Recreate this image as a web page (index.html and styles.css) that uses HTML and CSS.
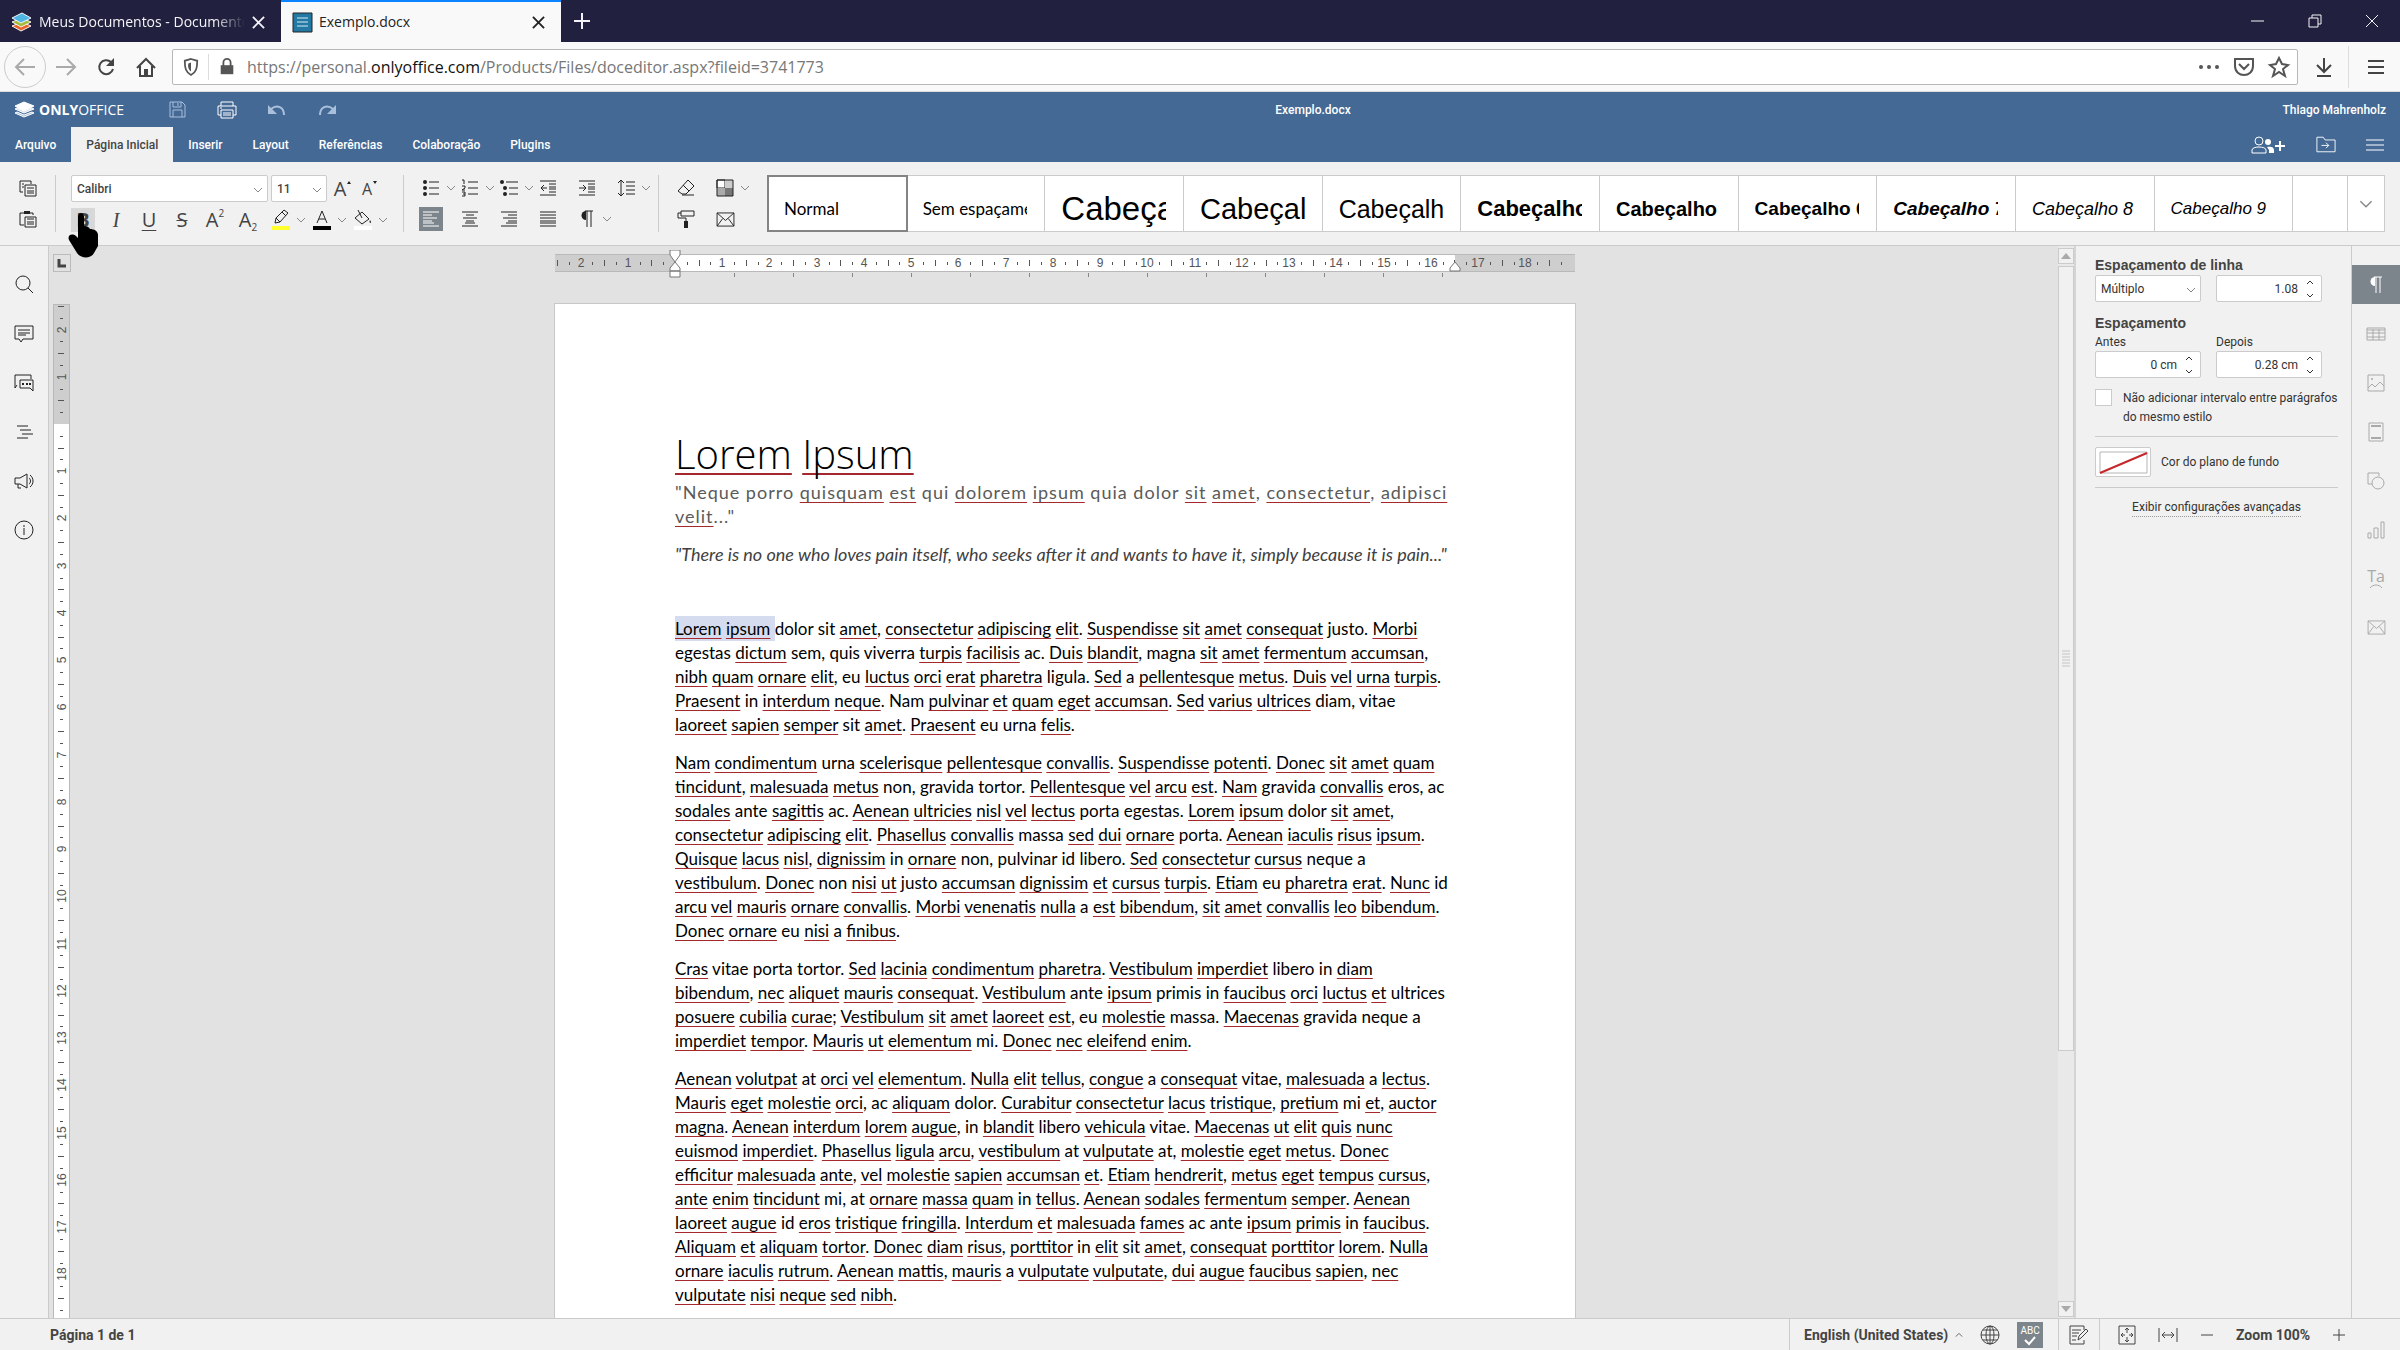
FILE: index.html
```html
<!DOCTYPE html>
<html lang="pt-BR">
<head>
<meta charset="utf-8">
<title>Exemplo.docx</title>
<link rel="stylesheet" href="styles.css">
</head>
<body>
<svg class="defs" aria-hidden="true">
  <symbol id="chev" viewBox="0 0 10 10"><path d="M1 3l4 4 4-4"/></symbol>
  <symbol id="cross" viewBox="0 0 14 14"><path d="M1 1l12 12M13 1L1 13"/></symbol>
  <symbol id="mail" viewBox="0 0 20 16"><path d="M1 1h18v14H1zM1 1l9 8 9-8M1 15l6-8M19 15l-6-8"/></symbol>
  <symbol id="pilcrow" viewBox="0 0 14 18"><path class="solid" d="M6 1a4 4 0 0 0 0 9z"/><path d="M5 1h8M7 1v16M11 1v16"/></symbol>
</svg>

<header class="tabstrip">
  <div class="btab">
    <svg class="i" width="21" height="21" viewBox="0 0 21 21"><path d="M1 14l10-4 9 4-10 5z" fill="#e8662a"/><path d="M1 10l10-4 9 4-10 5z" fill="#a5bd3a"/><path d="M1 6l10-5 9 5-10 5z" fill="#4fb6e3"/></svg>
    <span class="btab-title fade">Meus Documentos - Documentos</span>
    <button class="bare" aria-label="Fechar aba"><svg class="i ln2" width="13" height="13"><use href="#cross"/></svg></button>
  </div>
  <div class="btab active">
    <svg class="i" width="19" height="19" viewBox="0 0 19 19"><path d="M0 0h19v19H0z" fill="#2379a3"/><path d="M4 5h11M4 9h11M4 13h11" stroke="#d5ecf5" stroke-width="1"/></svg>
    <span class="btab-title">Exemplo.docx</span>
    <button class="bare" aria-label="Fechar aba"><svg class="i ln2" width="13" height="13"><use href="#cross"/></svg></button>
  </div>
  <button class="bare newtab" aria-label="Nova aba"><svg class="i ln2" width="18" height="18" viewBox="0 0 18 18"><path d="M9 1v16M1 9h16"/></svg></button>
  <div class="wincontrols">
    <button class="bare" aria-label="Minimizar"><svg class="i" width="14" height="14" viewBox="0 0 14 14"><path d="M0 7h13"/></svg></button>
    <button class="bare" aria-label="Restaurar"><svg class="i" width="14" height="14" viewBox="0 0 14 14"><path d="M1 4h9v9H1zM4 4V1h9v9h-3"/></svg></button>
    <button class="bare" aria-label="Fechar"><svg class="i" width="14" height="14"><use href="#cross"/></svg></button>
  </div>
</header>

<nav class="navbar">
  <button class="bare back" aria-label="Voltar"><svg class="i ln2" width="22" height="20" viewBox="0 0 22 20"><path d="M21 10H2M10 2l-8 8 8 8"/></svg></button>
  <button class="bare dim" aria-label="Avançar"><svg class="i ln2" width="22" height="20" viewBox="0 0 22 20"><path d="M1 10h19M12 2l8 8-8 8"/></svg></button>
  <button class="bare" aria-label="Recarregar"><svg class="i ln2" width="20" height="20" viewBox="0 0 20 20"><path d="M15 5a7 7 0 1 0 2 7"/><path class="solid" d="M18 1v8h-8z"/></svg></button>
  <button class="bare" aria-label="Início"><svg class="i ln2" width="20" height="20" viewBox="0 0 20 20"><path d="M1 11l9-9 9 9M4 9v10h12V9"/><path class="solid" d="M8 12h4v7H8z"/></svg></button>
  <div class="urlbox">
    <svg class="i ln2" width="16" height="18" viewBox="0 0 18 20"><path d="M9 1l7 2c0 8-1 13-7 16C3 16 2 11 2 3z"/><path class="solid" d="M9 5v10c-3-2-4-6-3-9z"/></svg>
    <span class="vsep"></span>
    <svg class="i ln2 lock" width="18" height="18" viewBox="0 0 18 20"><path d="M5 9V5a4 4 0 0 1 8 0v4"/><path class="solid" d="M2 8h14v10H2z"/></svg>
    <span class="url">https://personal.<b>onlyoffice.com</b>/Products/Files/doceditor.aspx?fileid=3741773</span>
    <svg class="i" width="20" height="20" viewBox="0 0 20 20"><g class="solid"><circle cx="2" cy="10" r="2"/><circle cx="10" cy="10" r="2"/><circle cx="18" cy="10" r="2"/></g></svg>
    <svg class="i ln2" width="20" height="20" viewBox="0 0 20 20"><path d="M1 2h18v7c0 12-18 12-18 0zM5 7l5 5 5-5"/></svg>
    <svg class="i ln2" width="20" height="20" viewBox="0 0 20 20"><path d="M10 1l3 6 6 1-5 4 2 7-6-4-6 4 2-7-5-4 6-1z"/></svg>
  </div>
  <button class="bare" aria-label="Downloads"><svg class="i ln2" width="18" height="20" viewBox="0 0 18 20"><path d="M9 1v13M2 8l7 7 7-7M2 19h14"/></svg></button>
  <span class="vsep tall"></span>
  <button class="bare" aria-label="Menu"><svg class="i ln2" width="16" height="18" viewBox="0 0 16 18"><path d="M0 3h16M0 9h16M0 15h16"/></svg></button>
</nav>

<div class="apphead">
  <div class="titlebar">
    <a class="logo" href="#"><svg class="i" width="21" height="17" viewBox="0 0 21 17"><path d="M1 12l9 4 10-4-2-1-8 3-7-3z" fill="#a9bfd8"/><path d="M1 8l9 4 10-4-2-1-8 3-7-3z" fill="#d5e0ec"/><path d="M1 5l9-4 10 4-10 5z" fill="#fff"/></svg><span><b>ONLY</b>OFFICE</span></a>
    <button class="bare soft" aria-label="Salvar"><svg class="i" width="17" height="17" viewBox="0 0 17 17"><path d="M1 1h12l3 3v12H1zM4 1v5h8V1M4 16V9h9v7M9 2v3"/></svg></button>
    <button class="bare" aria-label="Imprimir"><svg class="i" width="20" height="18" viewBox="0 0 20 18"><path d="M4 5V1h12v4M4 14H1V5h18v9h-3M4 9h12v8H4zM6 12h8M6 14h8M3 7h2"/></svg></button>
    <button class="bare soft" aria-label="Desfazer"><svg class="i" width="18" height="12" viewBox="0 0 18 12"><path class="ln2" d="M3 5c6-5 13-2 13 6"/><path class="solid" d="M0 1v9h9z"/></svg></button>
    <button class="bare soft" aria-label="Refazer"><svg class="i" width="18" height="12" viewBox="0 0 18 12"><path class="ln2" d="M15 5C9 0 2 3 2 11"/><path class="solid" d="M18 1v9H9z"/></svg></button>
    <span class="docname">Exemplo.docx</span>
    <span class="user">Thiago Mahrenholz</span>
  </div>
  <div class="menubar">
    <button class="mtab">Arquivo</button><button class="mtab on">Página Inicial</button><button class="mtab">Inserir</button><button class="mtab">Layout</button><button class="mtab">Referências</button><button class="mtab">Colaboração</button><button class="mtab">Plugins</button>
    <div class="menuright">
      <button class="bare" aria-label="Compartilhar"><svg class="i" width="35" height="18" viewBox="0 0 35 18"><circle cx="8" cy="5" r="4"/><path d="M1 17v-3c0-4 14-4 14 0v3z"/><circle class="solid" cx="17" cy="6" r="3"/><path class="solid" d="M16 11c4-1 7 0 7 3v3h-5v-3z"/><path class="ln2" d="M29 5v10M24 10h10"/></svg></button>
      <button class="bare" aria-label="Abrir local"><svg class="i" width="20" height="17" viewBox="0 0 22 18"><path d="M1 17V1h7l2 3h11v13zM6 10h8M11 7l3 3-3 3"/></svg></button>
      <button class="bare" aria-label="Opções"><svg class="i" width="18" height="14" viewBox="0 0 18 14"><path d="M0 2h18M0 7h18M0 12h18"/></svg></button>
    </div>
  </div>
</div>

<div class="toolbar">
  <div class="group clip">
    <div class="trow"><button class="tb" aria-label="Copiar"><svg class="i" width="18" height="17" viewBox="0 0 18 17"><path d="M4 12H1V1h11v3M3 4h2M3 7h2M6 5h11v11H6zM8 8h7M8 11h7M8 13h7"/></svg></button></div>
    <div class="trow"><button class="tb" aria-label="Colar"><svg class="i" width="18" height="18" viewBox="0 0 18 18"><path d="M5 15H1V3h13v2M6 7h11v10H6zM8 9h7M8 12h7M8 14h7"/><path class="solid" d="M5 1h6v3H5z"/></svg></button></div>
  </div>
  <div class="group font">
    <div class="trow">
      <label class="combo family"><select aria-label="Fonte"><option>Calibri</option></select><svg class="i"><use href="#chev"/></svg></label>
      <label class="combo size"><select aria-label="Tamanho"><option>11</option></select><svg class="i"><use href="#chev"/></svg></label>
      <button class="tb big" aria-label="Aumentar fonte">A<svg class="i tri" width="6" height="5" viewBox="0 0 6 5"><path class="solid" d="M1 4l2-3 2 3z"/></svg></button>
      <button class="tb small" aria-label="Diminuir fonte">A<svg class="i tri" width="6" height="5" viewBox="0 0 6 5"><path class="solid" d="M1 1l2 3 2-3z"/></svg></button>
    </div>
    <div class="trow letters">
      <button class="tb on-soft"><b>B</b></button>
      <button class="tb it">I</button>
      <button class="tb un">U</button>
      <button class="tb st">S</button>
      <button class="tb">A<sup>2</sup></button>
      <button class="tb">A<sub>2</sub></button>
      <div class="split"><button class="tb" aria-label="Realce"><svg class="i" width="20" height="21" viewBox="0 0 20 21"><path d="M13 1l4 3-8 9-5 1 1-5zM5 9l4 4M11 3l4 4"/><path d="M1 17h18v4H1z" fill="#ffff2e" stroke="none"/></svg></button><svg class="i chev"><use href="#chev"/></svg></div>
      <div class="split"><button class="tb" aria-label="Cor da fonte"><svg class="i" width="20" height="21" viewBox="0 0 20 21"><path d="M5 14l5-12 5 12M7 10h6"/><path d="M1 17h18v4H1z" fill="#000" stroke="none"/></svg></button><svg class="i chev"><use href="#chev"/></svg></div>
      <div class="split"><button class="tb" aria-label="Sombreamento"><svg class="i" width="20" height="21" viewBox="0 0 20 21"><path d="M9 3l7 7-7 5-7-6zM5 1l4 8"/><path class="solid" d="M17 11c3 4-2 4 0 0z"/><path d="M1 17h18v4H1z" fill="#fff" stroke="none"/></svg></button><svg class="i chev"><use href="#chev"/></svg></div>
    </div>
  </div>
  <div class="group para">
    <div class="trow">
      <div class="cell"><button class="tb" aria-label="Marcadores"><svg class="i" width="18" height="18" viewBox="0 0 18 18"><path d="M7 3h10M7 9h10M7 15h10"/><g class="solid"><circle cx="3" cy="3" r="2"/><circle cx="3" cy="9" r="2"/><circle cx="3" cy="15" r="2"/></g></svg></button><svg class="i chev"><use href="#chev"/></svg></div>
      <div class="cell"><button class="tb" aria-label="Numeração"><svg class="i" width="18" height="18" viewBox="0 0 18 18"><path d="M7 3h10M7 9h10M7 15h10M1 1h2v4M1 7h3v2l-3 2h3M1 13h3v4H1M2 15h2"/></svg></button><svg class="i chev"><use href="#chev"/></svg></div>
      <div class="cell"><button class="tb" aria-label="Lista multinível"><svg class="i" width="18" height="18" viewBox="0 0 18 18"><path d="M6 3h12M9 9h9M9 15h9"/><g class="solid"><circle cx="2" cy="3" r="2"/><circle cx="5" cy="9" r="2"/><circle cx="5" cy="15" r="2"/></g></svg></button><svg class="i chev"><use href="#chev"/></svg></div>
      <div class="cell"><button class="tb" aria-label="Diminuir recuo"><svg class="i" width="16" height="16" viewBox="0 0 16 16"><path d="M0 1h16M9 4h7M9 7h7M9 9h7M9 12h7M0 15h16M7 8H1M4 5L1 8l3 3"/></svg></button></div>
      <div class="cell"><button class="tb" aria-label="Aumentar recuo"><svg class="i" width="16" height="16" viewBox="0 0 16 16"><path d="M0 1h16M9 4h7M9 7h7M9 9h7M9 12h7M0 15h16M0 8h7M4 5l3 3-3 3"/></svg></button></div>
      <div class="cell"><button class="tb" aria-label="Espaçamento"><svg class="i" width="18" height="18" viewBox="0 0 18 18"><path d="M4 1v16M1 4l3-3 3 3M1 14l3 3 3-3M9 3h9M9 7h9M9 11h9M9 15h9"/></svg></button><svg class="i chev"><use href="#chev"/></svg></div>
    </div>
    <div class="trow">
      <div class="cell"><button class="tb on-dark" aria-label="Alinhar à esquerda"><svg class="i" width="16" height="16" viewBox="0 0 16 16"><path d="M0 1h16M0 4h9M0 7h14M0 10h9M0 12h11M0 15h16"/></svg></button></div>
      <div class="cell"><button class="tb" aria-label="Centralizar"><svg class="i" width="16" height="16" viewBox="0 0 16 16"><path d="M0 1h16M4 4h8M1 7h14M4 10h8M3 12h10M0 15h16"/></svg></button></div>
      <div class="cell"><button class="tb" aria-label="Alinhar à direita"><svg class="i" width="16" height="16" viewBox="0 0 16 16"><path d="M0 1h16M7 4h9M2 7h14M7 10h9M5 12h11M0 15h16"/></svg></button></div>
      <div class="cell"><button class="tb" aria-label="Justificar"><svg class="i" width="16" height="16" viewBox="0 0 16 16"><path d="M0 1h16M0 4h16M0 7h16M0 10h16M0 12h16M0 15h16"/></svg></button></div>
      <div class="cell"><button class="tb" aria-label="Caracteres não imprimíveis"><svg class="i" width="14" height="18"><use href="#pilcrow"/></svg></button><svg class="i chev"><use href="#chev"/></svg></div>
    </div>
  </div>
  <div class="group clean">
    <div class="trow">
      <div class="cell"><button class="tb" aria-label="Limpar estilo"><svg class="i" width="18" height="18" viewBox="0 0 18 18"><path d="M2 11L11 1l6 6-8 8H5l-4-3zM6 6l6 6M5 16h12"/></svg></button></div>
      <div class="cell"><button class="tb" aria-label="Esquema de cores"><svg class="i" width="18" height="18" viewBox="0 0 18 18"><path d="M1 1h8v8H1z" fill="#fff"/><path d="M9 1h8v8H9z" fill="#ccc" stroke="none"/><path d="M1 9h8v8H1z" fill="#aaa" stroke="none"/><path d="M9 9h8v8H9z" fill="#777" stroke="none"/><path d="M1 1h16v16H1z"/></svg></button><svg class="i chev"><use href="#chev"/></svg></div>
    </div>
    <div class="trow">
      <div class="cell"><button class="tb" aria-label="Copiar estilo"><svg class="i" width="18" height="18" viewBox="0 0 18 18"><path d="M4 1h13v5H4zM4 3H1v5h8v3"/><path class="solid" d="M7 11h4v7H7z"/></svg></button></div>
      <div class="cell"><button class="tb" aria-label="Mala direta"><svg class="i" width="19" height="15"><use href="#mail"/></svg></button></div>
    </div>
  </div>
  <div class="gallery">
    <button class="style sel s-normal"><span>Normal</span></button>
    <button class="style s-normal"><span>Sem espaçamento</span></button>
    <button class="style s-h1"><span>Cabeçalho 1</span></button>
    <button class="style s-h2"><span>Cabeçalho 2</span></button>
    <button class="style s-h3"><span>Cabeçalho 3</span></button>
    <button class="style s-h4"><span>Cabeçalho 4</span></button>
    <button class="style s-h5"><span>Cabeçalho 5</span></button>
    <button class="style s-h6"><span>Cabeçalho 6</span></button>
    <button class="style s-h6 it"><span>Cabeçalho 7</span></button>
    <button class="style s-h8 it"><span>Cabeçalho 8</span></button>
    <button class="style s-h9 it"><span>Cabeçalho 9</span></button>
    <span class="style blank"></span>
    <button class="more" aria-label="Mais estilos"><svg class="i" width="14" height="14"><use href="#chev"/></svg></button>
  </div>
</div>

<main class="work">
  <aside class="leftbar">
    <button class="bare" aria-label="Localizar"><svg class="i" width="20" height="20" viewBox="0 0 20 20"><circle cx="9" cy="8" r="7"/><path d="M14 13l5 5"/></svg></button>
    <button class="bare" aria-label="Comentários"><svg class="i" width="20" height="18" viewBox="0 0 20 18"><path d="M1 1h18v13H9l-2 3-2-3H1zM4 5h12M4 8h12M4 10h8"/></svg></button>
    <button class="bare" aria-label="Bate-papo"><svg class="i" width="20" height="18" viewBox="0 0 20 18"><path d="M3 11l-2 3V1h16v4M6 6h13v11l-3-3H6z"/><path class="dots" d="M8 10h2M12 10h2M15 10h2"/></svg></button>
    <button class="bare" aria-label="Navegação"><svg class="i" width="20" height="16" viewBox="0 0 20 16"><path d="M3 2h11M6 6h11M8 10h11M3 14h11"/></svg></button>
    <button class="bare" aria-label="Comentários e suporte"><svg class="i" width="20" height="16" viewBox="0 0 20 16"><path d="M1 5h5l7-4v14l-7-4H1zM4 11v4h3M15 5c2 1 2 5 0 6M16 2c4 3 4 9 0 12"/></svg></button>
    <button class="bare" aria-label="Sobre"><svg class="i" width="20" height="20" viewBox="0 0 20 20"><circle cx="10" cy="10" r="9"/><path d="M10 8v7M10 5v2"/></svg></button>
  </aside>
  <div class="vcol">
    <button class="tabstop" aria-label="Tabulação"><svg class="i ln3" width="10" height="10" viewBox="0 0 10 10"><path d="M2 1v7h7"/></svg></button>
    <svg id="vruler" class="vruler" width="17" height="1014"></svg>
  </div>
  <section class="canvas">
    <svg id="hruler" class="hruler" width="1020" height="28"></svg>
    <article class="page">
      <h1><u>Lorem</u> <u>Ipsum</u></h1>
      <p class="sub"><span>"Neque porro <u>quisquam</u> <u>est</u> qui <u>dolorem</u> <u>ipsum</u> quia dolor <u>sit</u> <u>amet</u>, <u>consectetur</u>, <u>adipisci</u></span><span><u>velit</u>..."</span></p>
      <p class="quote">"There is no one who loves pain itself, who seeks after it and wants to have it, simply because it is pain..."</p>
      <p class="body"><span><mark><u>Lorem</u> <u>ipsum</u> </mark>dolor sit <u>amet</u>, <u>consectetur</u> <u>adipiscing</u> <u>elit</u>. <u>Suspendisse</u> <u>sit</u> <u>amet</u> <u>consequat</u> justo. <u>Morbi</u></span>
      <span>egestas <u>dictum</u> sem, quis viverra <u>turpis</u> <u>facilisis</u> ac. <u>Duis</u> <u>blandit</u>, magna <u>sit</u> <u>amet</u> <u>fermentum</u> <u>accumsan</u>,</span>
      <span><u>nibh</u> <u>quam</u> <u>ornare</u> <u>elit</u>, eu <u>luctus</u> <u>orci</u> <u>erat</u> <u>pharetra</u> ligula. <u>Sed</u> a <u>pellentesque</u> <u>metus</u>. <u>Duis</u> <u>vel</u> <u>urna</u> <u>turpis</u>.</span>
      <span><u>Praesent</u> in <u>interdum</u> <u>neque</u>. Nam <u>pulvinar</u> <u>et</u> <u>quam</u> <u>eget</u> <u>accumsan</u>. <u>Sed</u> <u>varius</u> <u>ultrices</u> diam, vitae</span>
      <span><u>laoreet</u> <u>sapien</u> <u>semper</u> sit <u>amet</u>. <u>Praesent</u> eu urna <u>felis</u>.</span></p>
      <p class="body"><span><u>Nam</u> <u>condimentum</u> urna <u>scelerisque</u> <u>pellentesque</u> <u>convallis</u>. <u>Suspendisse</u> <u>potenti</u>. <u>Donec</u> <u>sit</u> <u>amet</u> <u>quam</u></span>
      <span><u>tincidunt</u>, <u>malesuada</u> <u>metus</u> non, gravida tortor. <u>Pellentesque</u> <u>vel</u> <u>arcu</u> <u>est</u>. <u>Nam</u> gravida <u>convallis</u> eros, ac</span>
      <span><u>sodales</u> ante <u>sagittis</u> ac. <u>Aenean</u> <u>ultricies</u> <u>nisl</u> <u>vel</u> <u>lectus</u> porta egestas. <u>Lorem</u> <u>ipsum</u> dolor <u>sit</u> <u>amet</u>,</span>
      <span><u>consectetur</u> <u>adipiscing</u> <u>elit</u>. <u>Phasellus</u> <u>convallis</u> massa <u>sed</u> <u>dui</u> <u>ornare</u> porta. <u>Aenean</u> <u>iaculis</u> <u>risus</u> <u>ipsum</u>.</span>
      <span><u>Quisque</u> <u>lacus</u> <u>nisl</u>, <u>dignissim</u> in <u>ornare</u> non, pulvinar id libero. <u>Sed</u> <u>consectetur</u> <u>cursus</u> neque a</span>
      <span><u>vestibulum</u>. <u>Donec</u> non <u>nisi</u> <u>ut</u> justo <u>accumsan</u> <u>dignissim</u> <u>et</u> <u>cursus</u> <u>turpis</u>. <u>Etiam</u> eu <u>pharetra</u> <u>erat</u>. <u>Nunc</u> id</span>
      <span><u>arcu</u> <u>vel</u> <u>mauris</u> <u>ornare</u> <u>convallis</u>. <u>Morbi</u> <u>venenatis</u> <u>nulla</u> a <u>est</u> <u>bibendum</u>, <u>sit</u> <u>amet</u> <u>convallis</u> <u>leo</u> <u>bibendum</u>.</span>
      <span><u>Donec</u> <u>ornare</u> eu <u>nisi</u> a <u>finibus</u>.</span></p>
      <p class="body"><span><u>Cras</u> vitae porta tortor. <u>Sed</u> <u>lacinia</u> <u>condimentum</u> <u>pharetra</u>. <u>Vestibulum</u> <u>imperdiet</u> libero in <u>diam</u></span>
      <span><u>bibendum</u>, <u>nec</u> <u>aliquet</u> <u>mauris</u> <u>consequat</u>. <u>Vestibulum</u> ante <u>ipsum</u> primis in <u>faucibus</u> <u>orci</u> <u>luctus</u> <u>et</u> ultrices</span>
      <span><u>posuere</u> <u>cubilia</u> <u>curae</u>; <u>Vestibulum</u> <u>sit</u> <u>amet</u> <u>laoreet</u> <u>est</u>, eu <u>molestie</u> massa. <u>Maecenas</u> gravida neque a</span>
      <span><u>imperdiet</u> <u>tempor</u>. <u>Mauris</u> <u>ut</u> <u>elementum</u> mi. <u>Donec</u> <u>nec</u> <u>eleifend</u> <u>enim</u>.</span></p>
      <p class="body"><span><u>Aenean</u> <u>volutpat</u> at <u>orci</u> <u>vel</u> <u>elementum</u>. <u>Nulla</u> <u>elit</u> <u>tellus</u>, <u>congue</u> a <u>consequat</u> vitae, <u>malesuada</u> a <u>lectus</u>.</span>
      <span><u>Mauris</u> <u>eget</u> <u>molestie</u> <u>orci</u>, ac <u>aliquam</u> dolor. <u>Curabitur</u> <u>consectetur</u> <u>lacus</u> <u>tristique</u>, <u>pretium</u> mi <u>et</u>, <u>auctor</u></span>
      <span><u>magna</u>. <u>Aenean</u> <u>interdum</u> <u>lorem</u> <u>augue</u>, in <u>blandit</u> libero <u>vehicula</u> vitae. <u>Maecenas</u> <u>ut</u> <u>elit</u> <u>quis</u> <u>nunc</u></span>
      <span><u>euismod</u> <u>imperdiet</u>. <u>Phasellus</u> <u>ligula</u> <u>arcu</u>, <u>vestibulum</u> at <u>vulputate</u> at, <u>molestie</u> <u>eget</u> <u>metus</u>. <u>Donec</u></span>
      <span><u>efficitur</u> <u>malesuada</u> <u>ante</u>, <u>vel</u> <u>molestie</u> <u>sapien</u> <u>accumsan</u> <u>et</u>. <u>Etiam</u> <u>hendrerit</u>, <u>metus</u> <u>eget</u> <u>tempus</u> <u>cursus</u>,</span>
      <span><u>ante</u> <u>enim</u> <u>tincidunt</u> mi, at <u>ornare</u> <u>massa</u> <u>quam</u> in <u>tellus</u>. <u>Aenean</u> <u>sodales</u> <u>fermentum</u> <u>semper</u>. <u>Aenean</u></span>
      <span><u>laoreet</u> <u>augue</u> id <u>eros</u> <u>tristique</u> <u>fringilla</u>. <u>Interdum</u> <u>et</u> <u>malesuada</u> <u>fames</u> ac ante <u>ipsum</u> <u>primis</u> in <u>faucibus</u>.</span>
      <span><u>Aliquam</u> <u>et</u> <u>aliquam</u> <u>tortor</u>. <u>Donec</u> <u>diam</u> <u>risus</u>, <u>porttitor</u> in <u>elit</u> sit <u>amet</u>, <u>consequat</u> <u>porttitor</u> <u>lorem</u>. <u>Nulla</u></span>
      <span><u>ornare</u> <u>iaculis</u> <u>rutrum</u>. <u>Aenean</u> <u>mattis</u>, <u>mauris</u> a <u>vulputate</u> <u>vulputate</u>, <u>dui</u> <u>augue</u> <u>faucibus</u> <u>sapien</u>, <u>nec</u></span>
      <span><u>vulputate</u> <u>nisi</u> <u>neque</u> <u>sed</u> <u>nibh</u>.</span></p>
    </article>
  </section>
  <div class="scroll">
    <button class="arrow" aria-label="Rolar para cima"><svg class="i" width="10" height="6" viewBox="0 0 10 6"><path d="M0 6l5-6 5 6z"/></svg></button>
    <div class="track"><div class="thumb"><svg class="i" width="8" height="18" viewBox="0 0 8 18"><path d="M0 1h8M0 4h8M0 7h8M0 10h8M0 13h8M0 16h8"/></svg></div></div>
    <button class="arrow" aria-label="Rolar para baixo"><svg class="i" width="10" height="6" viewBox="0 0 10 6"><path d="M0 0l5 6 5-6z"/></svg></button>
  </div>
  <aside class="panel">
    <h2>Espaçamento de linha</h2>
    <div class="pair">
      <label class="combo"><select aria-label="Tipo de espaçamento"><option>Múltiplo</option></select><svg class="i"><use href="#chev"/></svg></label>
      <label class="spin"><input type="text" value="1.08" aria-label="Valor"><svg class="i" width="8" height="18" viewBox="0 0 8 18"><path d="M1 4l3-3 3 3M1 14l3 3 3-3"/></svg></label>
    </div>
    <h2 class="second">Espaçamento</h2>
    <div class="pair labels">
      <label for="before">Antes</label><label for="after">Depois</label>
      <span class="spin"><input id="before" type="text" value="0 cm"><svg class="i" width="8" height="18" viewBox="0 0 8 18"><path d="M1 4l3-3 3 3M1 14l3 3 3-3"/></svg></span>
      <span class="spin"><input id="after" type="text" value="0.28 cm"><svg class="i" width="8" height="18" viewBox="0 0 8 18"><path d="M1 4l3-3 3 3M1 14l3 3 3-3"/></svg></span>
    </div>
    <label class="check"><input type="checkbox"><span>Não adicionar intervalo entre parágrafos<br>do mesmo estilo</span></label>
    <div class="bgrow"><button class="swatch" id="bgcolor" aria-label="Cor do plano de fundo"><svg width="49" height="23" viewBox="0 0 49 23"><path d="M1 1h47v21H1z" fill="#fff" stroke="#b5b5b5"/><path d="M1 22L48 2" stroke="#c4282d" stroke-width="2"/></svg></button><label for="bgcolor">Cor do plano de fundo</label></div>
    <a class="adv" href="#">Exibir configurações avançadas</a>
  </aside>
  <aside class="rail">
    <button class="bare on" aria-label="Parágrafo"><svg class="i" width="14" height="18"><use href="#pilcrow"/></svg></button>
    <button class="bare" aria-label="Tabela"><svg class="i" width="20" height="14" viewBox="0 0 20 14"><path d="M1 1h18v12H1zM1 3h18M1 6h18M1 10h18M7 2v11M13 2v11"/></svg></button>
    <button class="bare" aria-label="Imagem"><svg class="i" width="18" height="18" viewBox="0 0 18 18"><path d="M1 1h16v16H1zM1 14l4-4 3 3 5-5 4 4"/><circle class="solid" cx="5" cy="5" r="1"/></svg></button>
    <button class="bare" aria-label="Cabeçalho"><svg class="i" width="16" height="20" viewBox="0 0 16 20"><path d="M1 1h14v18H1z"/><path class="ln2" d="M3 4h10M3 16h10"/></svg></button>
    <button class="bare" aria-label="Forma"><svg class="i" width="18" height="18" viewBox="0 0 18 18"><path d="M5 12H1V1h11v3"/><circle cx="11" cy="11" r="6"/></svg></button>
    <button class="bare" aria-label="Gráfico"><svg class="i" width="18" height="18" viewBox="0 0 18 18"><path d="M1 12h3v5H1zM7 7h4v10H7zM14 1h3v16h-3z"/></svg></button>
    <button class="bare ta" aria-label="Arte de texto"><span>Ta</span><svg class="i" width="14" height="5" viewBox="0 0 14 5"><path d="M1 4c3-4 9-4 12 0"/></svg></button>
    <button class="bare" aria-label="Mala direta"><svg class="i" width="19" height="15"><use href="#mail"/></svg></button>
  </aside>
</main>

<footer class="status">
  <span class="pages">Página 1 de 1</span>
  <div class="sgroup lang"><button class="bare txt">English (United States)<svg class="i up" width="8" height="8"><use href="#chev"/></svg></button>
    <button class="bare" aria-label="Idioma"><svg class="i" width="20" height="20" viewBox="0 0 20 20"><circle cx="10" cy="10" r="9"/><ellipse cx="10" cy="10" rx="4" ry="9"/><path d="M10 1v18M1 10h18M3 5h14M3 15h14"/></svg></button>
    <button class="bare spell" aria-label="Verificação ortográfica"><span>ABC</span><svg class="i" width="12" height="9" viewBox="0 0 12 9"><path class="ln2" d="M1 4l4 4 6-7"/></svg></button></div>
  <div class="sgroup track-ch"><button class="bare" aria-label="Controlar alterações"><svg class="i" width="20" height="20" viewBox="0 0 20 20"><path d="M15 5V1H1v18h14v-4M3 5h9M3 8h7M3 11h5M9 15l1-4 7-7 2 2-7 7zM3 15h4"/></svg></button></div>
  <div class="sgroup zoom">
    <button class="bare" aria-label="Ajustar à página"><svg class="i" width="18" height="20" viewBox="0 0 18 20"><path d="M1 1h16v18H1zM9 3v5M7 5l2-2 2 2M9 17v-5M7 15l2 2 2-2M3 10h4M5 8l-2 2 2 2M15 10h-4M13 8l2 2-2 2"/></svg></button>
    <button class="bare" aria-label="Ajustar à largura"><svg class="i" width="20" height="14" viewBox="0 0 20 14"><path d="M1 0v14M19 0v14M4 7h12M7 4L4 7l3 3M13 4l3 3-3 3"/></svg></button>
    <button class="bare" aria-label="Diminuir zoom"><svg class="i" width="14" height="14" viewBox="0 0 14 14"><path d="M1 7h12"/></svg></button>
    <button class="bare txt">Zoom 100%</button>
    <button class="bare" aria-label="Aumentar zoom"><svg class="i" width="14" height="14" viewBox="0 0 14 14"><path d="M1 7h12M7 1v12"/></svg></button>
  </div>
</footer>

<svg class="pointer" width="32" height="46" viewBox="0 0 32 46"><path d="M10 4c1-4 5-4 6 0v10c3 0 5 1 6 3 4 0 8 2 8 6v11l-4 7c-3 6-13 6-17 0L1 28c-2-5 3-7 7-4l2 2z"/></svg>
<script src="rulers.js"></script>
</body>
</html>
```
FILE: styles.css
```css
:root {
  --ui: Roboto, "Liberation Sans", sans-serif;
  --sys: "Open Sans", "Noto Sans", sans-serif;
  --blue: #446995;
  --gray: #f1f1f1;
  --line: #cbcbcb;
  --ink: #444;
}
* { box-sizing: border-box; }
body { margin: 0; min-height: 100vh; height: 100vh; display: flex; flex-direction: column; overflow: hidden; font: 500 12px/18px var(--ui); color: var(--ink); background: var(--gray); }
button, input, select { font: inherit; color: inherit; margin: 0; padding: 0; border: 0; background: none; }
.defs { position: absolute; width: 0; height: 0; }
.i { display: block; flex: none; fill: none; stroke: currentColor; stroke-width: 1; overflow: visible; }
.ln2 { stroke-width: 2; }
.ln3 { stroke-width: 3; }
.solid { fill: currentColor; stroke: none; }
.bare { display: flex; align-items: center; justify-content: center; flex: none; }

/* browser tabs */
.tabstrip { flex: none; height: 42px; display: flex; background: #21213f; color: #f4f4f8; font: 14px/20px var(--sys); }
.btab { width: 281px; padding: 2px 16px 0 11px; display: flex; align-items: center; gap: 7px; }
.btab.active { width: 280px; background: #f9f9fa; color: #222; border-top: 2px solid #0a84ff; padding-top: 0; padding-left: 12px; }
.btab-title { flex: 1; min-width: 0; overflow: hidden; white-space: nowrap; }
.fade { -webkit-mask-image: linear-gradient(90deg, #000 85%, transparent); mask-image: linear-gradient(90deg, #000 85%, transparent); }
.newtab { width: 42px; }
.wincontrols { margin-left: auto; display: flex; }
.wincontrols .bare { width: 57px; }

/* navigation bar */
.navbar { flex: none; height: 50px; display: flex; align-items: center; padding: 0 7px 0 4px; background: #f9f9fa; color: #444; font: 16px/22px var(--sys); border-bottom: 1px solid #ddd; }
.navbar > .bare { width: 40px; height: 40px; }
.navbar > .back { width: 42px; height: 42px; border: 1px solid #ccc; border-radius: 50%; color: #aaa; }
.navbar > .dim { color: #aaa; }
.urlbox { flex: 1; height: 36px; margin: 0 6px 0 6px; padding: 0 8px 0 10px; border: 1px solid #b8b8b8; border-radius: 2px; background: #fff; display: flex; align-items: center; gap: 15px; color: #555; }
.vsep { width: 1px; height: 26px; background: #ddd; margin-left: -6px; }
.lock { margin-left: -6px; }
.url { flex: 1; color: #777; margin-left: -4px; white-space: nowrap; }
.url b { font-weight: 400; color: #111; }
.vsep.tall { height: 42px; margin: 0 4px; }
.navbar > .bare:last-child { width: 34px; margin-left: 6px; }

/* editor header */
.apphead { flex: none; background: var(--blue); color: #fff; }
.titlebar { height: 35px; display: flex; align-items: center; position: relative; }
.titlebar > .bare { width: 50px; height: 34px; }
.logo { width: 152px; padding-left: 14px; display: flex; align-items: center; gap: 4px; color: #fff; text-decoration: none; font: 14px/18px var(--sys); }
.soft { color: #a9c0dc; }
.docname { position: absolute; left: 0; right: 0; text-align: center; margin-left: 226px; pointer-events: none; }
.user { margin-left: auto; padding-right: 14px; }
.menubar { height: 35px; display: flex; }
.mtab { padding: 0 15px; line-height: 36px; }
.mtab.on { background: var(--gray); color: var(--ink); }
.menuright { margin-left: auto; display: flex; gap: 30px; padding-right: 16px; }

/* toolbar */
.toolbar { flex: none; height: 84px; display: flex; padding-top: 13px; border-bottom: 1px solid var(--line); }
.group { flex: none; height: 57px; display: flex; flex-direction: column; gap: 5px; border-right: 1px solid var(--line); }
.trow { display: flex; align-items: center; height: 27px; }
.clip { width: 56px; padding-left: 16px; }
.font { width: 348px; padding-left: 15px; }
.para { width: 255px; padding-left: 15px; }
.clean { width: 97px; padding-left: 15px; border: 0; }
.tb { width: 24px; height: 24px; display: flex; align-items: center; justify-content: center; flex: none; font: 20px/24px var(--sys); }
.tb > .i, .leftbar .i { color: #222; }
.big { margin-left: 4px; }
.small { margin-left: 3px; font-size: 16px; }
.tri { align-self: flex-start; margin-top: 3px; }
.letters .tb { margin-right: 9px; }
.letters .split .tb, .cell .tb { margin: 0; }
.it { font-style: italic; }
.tb.it { font-family: "Liberation Serif", serif; }
.un { text-decoration: underline; text-underline-offset: 3px; text-decoration-thickness: 1px; }
.st { text-decoration: line-through; text-decoration-thickness: 1px; }
.tb sup, .tb sub { font-size: 10px; line-height: 10px; }
.tb sup { align-self: flex-start; }
.tb sub { align-self: flex-end; }
.split { width: 41px; display: flex; align-items: center; }
.cell { width: 39px; display: flex; align-items: center; }
.chev { width: 10px; height: 10px; margin-left: 3px; color: #888; }
.on-soft { background: #d8d8d8; }
.on-dark { background: #7d858c; }
.on-dark > .i { color: #fff; }
.combo, .spin { position: relative; display: block; height: 27px; background: #fff; border: 1px solid var(--line); border-radius: 2px; }
.combo select { appearance: none; width: 100%; height: 25px; padding-left: 5px; display: block; }
.combo .i { position: absolute; right: 4px; top: 9px; width: 10px; height: 10px; color: #888; pointer-events: none; }
.family { width: 197px; margin-right: 3px; }
.size { width: 56px; }
.gallery { flex: 1; min-width: 0; margin: 0 15px 0 11px; height: 57px; display: flex; background: #fff; border: 1px solid var(--line); }
.style { flex: 139 1 139px; min-width: 0; padding: 0 17px 0 16px; border-right: 1px solid var(--line); text-align: left; color: #000; display: flex; align-items: flex-end; }
.style span { display: block; overflow: hidden; white-space: nowrap; flex: 1; min-width: 0; }
.sel { outline: 2px solid #848484; outline-offset: -1px; }
.style.blank { flex: 55 1 55px; padding: 0; }
.more { width: 36px; flex: none; display: flex; align-items: center; justify-content: center; color: #888; }
.s-normal { font: 17px/44px Lato, sans-serif; }
.s-h1 { font: 33px/44px "Liberation Sans", sans-serif; }
.s-h2 { font: 29px/44px "Liberation Sans", sans-serif; }
.s-h3 { font: 25px/44px "Liberation Sans", sans-serif; }
.s-h4 { font: bold 22px/44px "Liberation Sans", sans-serif; }
.s-h5 { font: bold 20px/44px "Liberation Sans", sans-serif; }
.s-h6 { font: bold 19px/44px "Liberation Sans", sans-serif; }
.s-h8 { font: 18px/44px "Liberation Sans", sans-serif; }
.s-h9 { font: 17px/44px "Liberation Sans", sans-serif; }
.style.it { font-style: italic; }

/* work area */
.work { flex: 1; min-height: 0; display: grid; grid-template-columns: 49px 23px minmax(0, 1fr) 18px 275px 49px; grid-template-rows: minmax(0, 1fr); }
.leftbar { border-right: 1px solid var(--line); padding-top: 14px; }
.leftbar .bare { width: 48px; height: 49px; }
.dots { stroke-width: 2; }
.vcol { background: #e2e2e2; padding: 8px 0 0 4px; display: flex; flex-direction: column; gap: 32px; overflow: hidden; }
.tabstop { width: 18px; height: 18px; border: 1px solid #bbb; display: flex; align-items: center; justify-content: center; flex: none; }
.vruler, .hruler { display: block; flex: none; font: 12px "Liberation Sans", sans-serif; }
.canvas { background: #e2e2e2; padding-top: 4px; display: flex; flex-direction: column; align-items: center; overflow: hidden; }
.page { flex: none; width: 1022px; margin-top: 25px; padding: 124px 120px 120px; background: #fff; border: 1px solid #c8c8c8; color: #000; white-space: nowrap; font: 17px/24px Lato, sans-serif; }
.page u { text-decoration: underline 1px #a5282d; text-underline-offset: 3px; text-decoration-skip-ink: none; }
.page p { margin: 0 0 14px; }
.page p span { display: block; }
.page h1 { margin: 0; font: 300 40px/52px "Open Sans", sans-serif; }
.page h1 u { text-decoration-thickness: 2px; text-underline-offset: 4px; }
.page .sub { font-size: 18px; color: #5a5a5a; letter-spacing: 1px; }
.page .quote { font-size: 18px; font-style: italic; color: #404040; margin-bottom: 51px; }
mark { background: #d5dcef; color: inherit; padding: 2px 0; }
.scroll { display: flex; flex-direction: column; background: #e9e9e9; border-right: 2px solid #d4d4d4; padding: 2px 0 1px; gap: 2px; }
.arrow { height: 16px; border: 1px solid var(--line); background: var(--gray); display: flex; align-items: center; justify-content: center; flex: none; }
.arrow path { fill: #aaa; stroke: none; }
.track { flex: 1; }
.thumb { height: 76%; background: var(--gray); border: 1px solid var(--line); display: flex; align-items: center; justify-content: center; color: #c4c4c4; }

/* paragraph settings */
.panel { padding: 10px 13px 0 19px; font-weight: 400; color: #333; }
.panel h2 { margin: 0; font: bold 14px/19px "Liberation Sans", sans-serif; color: var(--ink); }
.panel .second { margin-top: 12px; }
.pair { display: grid; grid-template-columns: 106px 106px; column-gap: 15px; }
.labels { line-height: 18px; }
.spin input { width: 100%; height: 25px; padding-right: 23px; text-align: right; display: block; background: none; }
.spin .i { position: absolute; right: 7px; top: 4px; }
.check { display: flex; gap: 11px; margin-top: 11px; padding-bottom: 9px; border-bottom: 1px solid var(--line); line-height: 19px; white-space: nowrap; }
.check input { appearance: none; width: 17px; height: 17px; border: 1px solid var(--line); background: #fff; flex: none; }
.bgrow { display: flex; align-items: center; gap: 10px; padding: 10px 0; border-bottom: 1px solid var(--line); }
.swatch { width: 56px; height: 30px; border: 1px solid var(--line); border-radius: 2px; background: #fff; display: flex; align-items: center; justify-content: center; }
.adv { display: table; margin: 10px auto 0; color: inherit; text-decoration: none; border-bottom: 1px dotted #999; }
.rail { border-left: 1px solid var(--line); padding-top: 14px; color: #a9a9a9; }
.rail .bare { width: 100%; height: 49px; }
.rail .on { height: 39px; margin: 5px 0; background: #7d858c; color: #fff; }
.rail .ta { flex-direction: column; font: 16px/16px var(--sys); }

/* status bar */
.status { flex: none; height: 32px; display: flex; align-items: center; border-top: 1px solid var(--line); font-weight: 700; font-size: 14px; }
.pages { flex: 1; padding-left: 50px; }
.sgroup { height: 100%; display: flex; align-items: center; border-left: 1px solid var(--line); }
.lang { width: 269px; padding-left: 14px; gap: 17px; }
.txt { gap: 7px; }
.up { transform: rotate(180deg); }
.spell { width: 26px; height: 26px; flex-direction: column; background: #7d858c; color: #fff; font: 10px/11px var(--ui); }
.track-ch { width: 41px; justify-content: center; }
.zoom { width: 301px; padding-left: 18px; gap: 22px; }
.pointer { position: absolute; left: 68px; top: 212px; pointer-events: none; fill: #000; }
```
FILE: rulers.js
```js
// Draws both rulers: one centimetre is 47.24px at the current zoom.
const CM = 47.24;

function scale(length, origin) {
  const marks = [];
  for (let q = -12; q < 120; q++) {
    const at = Math.round(origin + q * CM / 4);
    if (at < 2 || at > length - 3 || q === 0) continue;
    marks.push({ at, q });
  }
  return marks;
}

function drawHorizontal(svg) {
  const start = 120, end = 900, width = 1020;
  let out = `<rect x="0" y="4" width="${width}" height="18" fill="#b9b9b9"/><rect x="0" y="5" width="${width}" height="16" fill="#cecece"/><rect x="${start}" y="5" width="${end - start}" height="16" fill="#fff"/>`;
  for (const { at, q } of scale(width, start)) {
    if (q % 4 === 0) out += `<text x="${at}" y="17" text-anchor="middle" fill="#555">${Math.abs(q / 4)}</text>`;
    else if (q % 2 === 0) out += `<rect x="${at}" y="10" width="1" height="6" fill="#555"/>`;
    else out += `<rect x="${at}" y="12" width="1" height="3" fill="#555"/>`;
  }
  for (let t = 1; t < 14; t++) out += `<rect x="${start + t * 59}" y="23" width="1" height="4" fill="#888"/>`;
  out += `<g fill="#fff" stroke="#777"><path d="M115 0h10v5l-5 7-5-7z"/><path d="M120 12l5 6v3h-10v-3zM115 21h10v6h-10z"/><path d="M900 12l5 6v3h-10v-3z"/></g>`;
  svg.innerHTML = out;
}

function drawVertical(svg) {
  const start = 120, length = 1014;
  let out = `<rect width="17" height="${length}" fill="#b9b9b9"/><rect x="1" y="1" width="15" height="${start}" fill="#cecece"/><rect x="1" y="${start}" width="15" height="${length}" fill="#fff"/>`;
  for (const { at, q } of scale(length, start)) {
    if (q % 4 === 0) out += `<text text-anchor="middle" fill="#555" transform="translate(13 ${at}) rotate(-90)">${Math.abs(q / 4)}</text>`;
    else if (q % 2 === 0) out += `<rect x="5" y="${at}" width="6" height="1" fill="#555"/>`;
    else out += `<rect x="7" y="${at}" width="3" height="1" fill="#555"/>`;
  }
  svg.innerHTML = out;
}

drawHorizontal(document.getElementById("hruler"));
drawVertical(document.getElementById("vruler"));
```
